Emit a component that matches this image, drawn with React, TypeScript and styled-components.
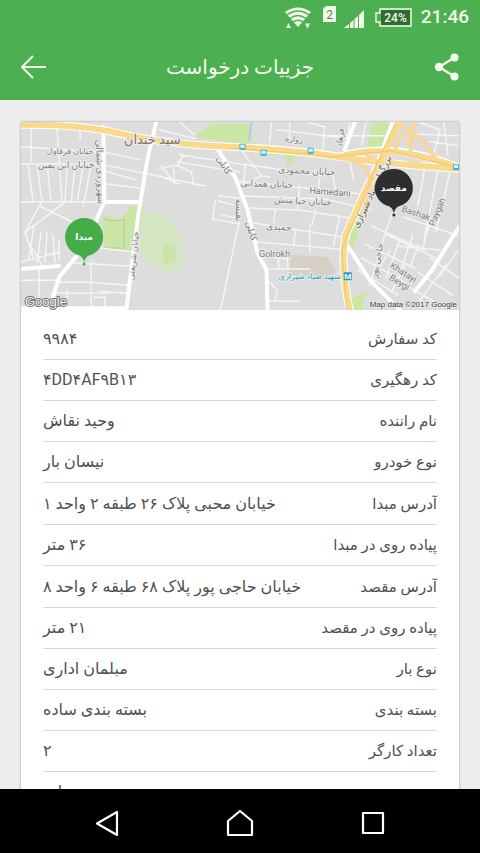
import React from 'react';
import styled, { createGlobalStyle } from 'styled-components';

const GlobalStyle = createGlobalStyle`
  * { box-sizing: border-box; }
  body { margin: 0; background: #ededed; }
  button { font: inherit; color: inherit; border: 0; background: none; padding: 0; cursor: pointer; }
`;

const Screen = styled.div`
  display: flex;
  flex-direction: column;
  height: 100vh;
  overflow: hidden;
  background: #ededed;
  color: #505050;
  font-family: Roboto, 'DejaVu Sans', sans-serif;
`;

const StatusBar = styled.div`
  display: flex;
  flex: none;
  justify-content: flex-end;
  align-items: center;
  height: 34px;
  padding: 0 11px;
  background: #4caf50;
  color: #f1fbea;
  svg { display: block; }
`;

const Clock = styled.time`
  margin-left: 9px;
  font-size: 19px;
  font-weight: 500;
  line-height: 34px;
`;

const AppBar = styled.header`
  display: flex;
  flex: none;
  align-items: center;
  justify-content: space-between;
  height: 66px;
  padding: 0 16px;
  background: #4caf50;
  color: #f4fdf0;
`;

const BarButton = styled.button`
  display: grid;
  place-items: center;
  width: 34px;
  height: 40px;
`;

const Title = styled.h1`
  margin: 0;
  font-size: 20px;
  font-weight: 400;
  line-height: 28px;
`;

const Content = styled.main`
  flex: 1;
  min-height: 0;
  overflow-y: auto;
  scrollbar-width: none;
  padding: 22px 21px;
`;

const Card = styled.article`
  background: #fff;
  box-shadow: 0 0 2px rgba(0, 0, 0, 0.4);
`;

const MapBox = styled.div`
  svg { display: block; width: 100%; height: 188px; }
`;

const Details = styled.dl`
  margin: 0;
  padding: 9px 22px 20px;
`;

const Row = styled.div<{ $address?: boolean }>`
  display: flex;
  align-items: center;
  justify-content: space-between;
  height: ${(p) => (p.$address ? 42 : 41)}px;
  border-bottom: 1px solid #d9d9d9;
  line-height: 24px;
  white-space: nowrap;
`;

const Label = styled.dt`
  font-size: 15px;
`;

const Value = styled.dd`
  margin: 0;
  font-size: 16px;
`;

const NavBar = styled.nav`
  display: flex;
  flex: none;
  justify-content: center;
  align-items: center;
  gap: 93px;
  height: 64px;
  padding-top: 4px;
  background: #000;
  color: #fff;
`;

const NavButton = styled.button`
  display: grid;
  place-items: center;
  width: 40px;
  height: 48px;
`;

const rows: { label: string; value: string; address?: boolean; code?: boolean }[] = [
  { label: 'کد سفارش', value: '۹۹۸۴' },
  { label: 'کد رهگیری', value: '۴DD۴AF۹B۱۳', code: true },
  { label: 'نام راننده', value: 'وحید نقاش' },
  { label: 'نوع خودرو', value: 'نیسان بار' },
  { label: 'آدرس مبدا', value: 'خیابان محبی پلاک ۲۶ طبقه ۲ واحد ۱', address: true },
  { label: 'پیاده روی در مبدا', value: '۳۶ متر' },
  { label: 'آدرس مقصد', value: 'خیابان حاجی پور پلاک ۶۸ طبقه ۶ واحد ۸', address: true },
  { label: 'پیاده روی در مقصد', value: '۲۱ متر' },
  { label: 'نوع بار', value: 'مبلمان اداری' },
  { label: 'بسته بندی', value: 'بسته بندی ساده' },
  { label: 'تعداد کارگر', value: '۲' },
  { label: 'بیمه', value: 'ندارد' },
];

const StatusIcons = () => (
  <svg width="128" height="30" viewBox="284 2 128 30" fill="#f1fbea" aria-label="Wi-Fi, SIM 2, 24%">
    <path d="M285 12Q298 3 311 12L298 27Z" />
    <g fill="none" stroke="#4caf50" strokeWidth="1.4">
      <path d="M287 15Q298 7 309 15" />
      <path d="M290 18.500Q298 12.500 306 18.500" />
      <path d="M293 22Q298 18.500 303 22" />
    </g>
    <path d="M286 28l2.500-5 2.500 5zM305 23.500h5l-2.500 5z" />
    <path d="M326 6h10v16h-13V9z" />
    <text x="329.500" y="18.500" fontSize="12" textAnchor="middle" fill="#3f8d42">2</text>
    <path d="M344 28l5-4v4zM350 23l3.500-3v8H350zM354.500 19l3.500-3v12h-3.500zM359 15l5-5v18h-5z" />
    <path d="M358.500 12v16" stroke="#4caf50" strokeWidth="1" />
    <path d="M380 9h31v17h-31v-4h-4v-9h4z" fill="#4caf50" stroke="#f1fbea" strokeWidth="1.400" />
    <path d="M381 10h29v15h-29z" fill="#2f6b33" />
    <text x="395.500" y="22" fontSize="12" fontWeight="500" textAnchor="middle">24%</text>
  </svg>
);

const BackIcon = () => (
  <svg width="28" height="26" viewBox="0 0 28 26" fill="none" stroke="currentColor" strokeWidth="2">
    <path d="M27 13H3M14 2L3 13l11 11" />
  </svg>
);

const ShareIcon = () => (
  <svg width="26" height="28" viewBox="0 0 26 28" fill="currentColor">
    <path d="M20.500 4.500L5 14l15.500 9.500" fill="none" stroke="currentColor" strokeWidth="2.400" />
    <circle cx="20.500" cy="4.500" r="4" />
    <circle cx="5" cy="14" r="4.200" />
    <circle cx="20.500" cy="23.500" r="4" />
  </svg>
);

type MapLabelData = { t: string; x: number; y: number; r?: number; s?: number; c?: string };

const mapLabels: MapLabelData[] = [
  { t: 'سید  خندان', x: 153, y: 144, s: 13, c: '#85705a' },
  { t: 'خیابان قرقاول', x: 71, y: 154 },
  { t: 'خیابان ابن یمین', x: 67, y: 168, s: 9 },
  { t: 'سهروردی شمالی', x: 98, y: 172, r: 88, s: 9 },
  { t: 'خیابان شریعتی', x: 137, y: 256, r: -84 },
  { t: 'کابلی', x: 222, y: 167, r: 57, s: 9 },
  { t: 'کابلی', x: 249, y: 232, r: 72, s: 9 },
  { t: 'نفیسه', x: 236, y: 210, r: 90, s: 9 },
  { t: 'رواره', x: 294, y: 142, r: 6 },
  { t: 'فرهاد', x: 343, y: 138, r: -82 },
  { t: 'خیابان محمودی', x: 307, y: 174, r: 3, s: 9 },
  { t: 'خیابان همدانی', x: 267, y: 187, r: 2, s: 9 },
  { t: 'Hamedani', x: 330, y: 195, r: 5, s: 9 },
  { t: 'خیابان حیا منش', x: 303, y: 204, r: 3, s: 9 },
  { t: 'حمیدی', x: 279, y: 230, r: 3, s: 9 },
  { t: 'Golrokh', x: 275, y: 257, s: 9 },
  { t: 'شهید صیاد شیرازی', x: 310, y: 279, c: '#2b9ac7' },
  { t: 'بزرگراه صیاد شیرازی', x: 375, y: 193, r: -65, s: 9, c: '#6c5a42' },
  { t: 'Bashak', x: 415, y: 216, r: 19, s: 9 },
  { t: 'Paygah', x: 440, y: 213, r: -68, s: 9 },
  { t: 'حاجی پور', x: 380, y: 261, r: -78, s: 9 },
  { t: 'Khatayi', x: 402, y: 275, r: 32, s: 9 },
  { t: 'Beygi', x: 398, y: 285, r: 32, s: 9 },
];

const MapLabel = ({ t, x, y, r = 0, s = 8, c = '#7c7c7c' }: MapLabelData) => (
  <text x={x} y={y} fontSize={s} fill={c} textAnchor="middle" stroke="#ececec" strokeWidth="2" strokeLinejoin="round" paintOrder="stroke" transform={`rotate(${r} ${x} ${y})`}>
    {t}
  </text>
);

const Pin = ({ x, y, color, text }: { x: number; y: number; color: string; text: string }) => (
  <g>
    <path d={`M${x - 10} ${y + 15}Q${x - 1} ${y + 19} ${x} ${y + 25}Q${x + 1} ${y + 19} ${x + 10} ${y + 15}z`} fill={color} />
    <circle cx={x} cy={y} r="19" fill={color} />
    <circle cx={x} cy={y + 27} r="1.500" fill={color} />
    <text x={x} y={y + 3} fontSize="9" fontWeight="700" textAnchor="middle" fill="#fff">{text}</text>
  </g>
);

const streetsThin = `
M32 126V162M58 129L63 202M81 130V140M22 147L98 152M22 164H100L206 186M22 202H104
M29 164L34 202M38 165L43 202M48 165L52 202M68 165L66 202M76 165L72 202M84 166L78 202M92 166L84 206
M103 152L142 160M105 171L137 180M107 184L140 188M42 203L26 232 35 260M40 206L88 229M26 232L65 203
M28 240L45 268M35 226L30 258M42 232L38 262M48 232L46 262M54 235L56 262M60 240V260
M22 262L60 252M92 247L134 252M75 263L130 266M60 282H90L130 285M52 293H110M92 262V308M40 270V305M68 290V308M95 297H106V308
M100 291L128 293M22 280H62M160 130L196 139M180 122L195 135M240 164L328 176
M180 155L240 164M184 155L178 166M178 162L240 172M160 176L180 184M162 166L175 183 174 165 160 170M176 165L192 172 194 184 202 185
M246 164L244 184 262 176M240 148L262 176 270 177M237 181L325 190 380 196M243 196L325 199 372 210M219 196L240 198
M216 200L213 219 240 224M219 201L234 205M222 215L236 218M247 208L300 210 363 220M276 210L274 222M254 223L292 229 350 238
M296 229L294 245M258 242L350 250M270 257L288 259V267M279 254V267M268 269H310M268 280L278 290 275 301M267 301H300
M240 220L221 310M272 122L270 142M310 123L325 127 323 150M277 130L350 139M290 122V143M350 122L346 154M366 123L362 145M325 136L385 136
M320 178L318 200M332 170L336 192M350 161L354 180M300 185L298 210M316 210L312 225M340 215L334 245M310 225V252
M420 123L440 130 434 154M430 142L459 146M405 134L459 136M444 123L448 155M425 168L418 205M438 171L424 240M450 172L436 232
M392 214L380 250 370 285M372 226L425 250M365 244L415 268M362 258L405 282M358 270L398 295M400 240L386 278M413 235L396 284
M404 217L459 236M386 234L440 260M397 246L440 250M419 245L410 267M429 225L423 248M405 265L392 291M376 273L390 250
M430 258L459 278M418 272L452 295M406 285L440 305M446 265L420 300M458 250L440 276
`;

const streetsWide = `
M22 269L60 266M104 127L105 198M107 202H140M157 122L148 160 139 215 127 310M106 200L85 247 60 277 50 310M22 308H125
M217 147L236 178 248 210 258 253 267 270 268 310M355 123L345 150M459 227L432 270 415 291M348 246L370 280 400 310
`;

const RouteMap = () => (
  <svg viewBox="22 122 437 188" preserveAspectRatio="xMidYMid slice" role="img" aria-label="Map data ©2017 Google">
    <rect x="0" y="100" width="500" height="230" fill="#dddddd" />
    <g fill="#c9e6a4">
      <path d="M103 216l19 3 10-13h12l-7 46-32-5z" />
      <path d="M195 137l17-13h40l-2 23-34-7zM252 143l35 5-9 8-34-5z" />
      <path d="M372 123h13l-9 27-9-1zM379 123h12l-8 25-8 2zM352 207l12 3-11 42-9-4zM352 298l15-7-6 19h-11zM284 152h10v13h-7z" />
    </g>
    <path d="M143 214l16-1 16 11 8 15v27l-13 7-21-9-9-14z" fill="#d4e5c3" />
    <path d="M164 243l12 4v13l-12 4z" fill="#c9e6a4" />
    <path d="M292 255l35 2 10 15-13 8-35-6z" fill="#d5cfc5" />
    <path d="M105 219q11 4 20 0v29h-19" fill="none" stroke="#bdc48d" />
    <g fill="none" strokeLinejoin="round" strokeLinecap="round">
      <path d={streetsThin} stroke="#f5f5f5" strokeWidth="1.500" />
      <path d={streetsWide} stroke="#ffffff" strokeWidth="4" />
      <path d="M252 122L250 140" stroke="#b8c5e8" strokeWidth="2" />
      <g stroke="#fff" strokeWidth="8">
        <path d="M22 125Q80 124 122 134T230 147 340 157 459 169M340 157Q390 140 459 168M395 122L383 155 365 192 346 235Q340 265 350 310" />
      </g>
      <g stroke="#f5d7a2" strokeWidth="4">
        <path d="M330 157Q362 160 368 172T364 208M398 122L414 135 410 153M415 122L408 144M395 150Q403 121 423 141L436 159M388 160L398 164 418 163M368 156L380 163" />
      </g>
      <path d="M22 125Q80 124 122 134T230 147 340 157 459 169M340 157Q390 142 459 168M399 122L384 155 365 192 346 235Q340 265 350 310" stroke="#f9d98b" strokeWidth="6" />
      <path d="M230 148L335 157 390 151 459 168M396 122L378 162 357 215 342 248 347 310" stroke="#f1c774" strokeWidth="1" />
    </g>
    {[[243, 147], [264, 153], [311, 151], [456, 167]].map(([x, y]) => (
      <g key={x}>
        <rect x={x - 3} y={y - 3} width="6" height="6" rx="1" fill="#1fa3d2" />
        <path d={`M${x - 2} ${y - 2}h4v3h-4zM${x - 2} ${y + 2}h1M${x + 1} ${y + 2}h1`} fill="#d9f2fa" stroke="#d9f2fa" strokeWidth=".5" />
      </g>
    ))}
    {mapLabels.map((l) => <MapLabel key={`${l.t}${l.x}`} {...l} />)}
    <rect x="344" y="272" width="8" height="8" rx="1" fill="#1a9fd0" />
    <text x="348" y="279" fontSize="8" fontWeight="700" textAnchor="middle" fill="#fff">M</text>
    <Pin x={85} y={237} color="#43ad49" text="مبدا" />
    <Pin x={394} y={188} color="#2e2e2e" text="مقصد" />
    <text x="26" y="306" fontSize="13" fontFamily="Liberation Sans" fill="#f2f2f2" stroke="#777" strokeWidth="2" strokeLinejoin="round" paintOrder="stroke">Google</text>
    <text x="457" y="307" fontSize="8" fontFamily="Liberation Sans" textAnchor="end" fill="#444" stroke="#e8e8e8" strokeWidth="2" paintOrder="stroke">Map data ©2017 Google</text>
  </svg>
);

export default function App() {
  return (
    <Screen>
      <GlobalStyle />
      <StatusBar>
        <StatusIcons />
        <Clock>21:46</Clock>
      </StatusBar>
      <AppBar>
        <BarButton aria-label="بازگشت"><BackIcon /></BarButton>
        <Title dir="rtl">جزییات درخواست</Title>
        <BarButton aria-label="اشتراک گذاری"><ShareIcon /></BarButton>
      </AppBar>
      <Content>
        <Card>
          <MapBox><RouteMap /></MapBox>
          <Details dir="rtl">
            {rows.map((row) => (
              <Row key={row.label} $address={row.address}>
                <Label>{row.label}</Label>
                <Value dir={row.code ? 'ltr' : 'rtl'}>{row.value}</Value>
              </Row>
            ))}
          </Details>
        </Card>
      </Content>
      <NavBar>
        <NavButton aria-label="بازگشت">
          <svg width="26" height="28" viewBox="0 0 26 28" fill="none" stroke="currentColor" strokeWidth="2.200" strokeLinejoin="round"><path d="M23 3v23L3 14.500z" /></svg>
        </NavButton>
        <NavButton aria-label="خانه">
          <svg width="30" height="30" viewBox="0 0 30 30" fill="none" stroke="currentColor" strokeWidth="2.200" strokeLinejoin="round"><path d="M3 13L15 3l12 10v14H3z" /></svg>
        </NavButton>
        <NavButton aria-label="برنامه‌های اخیر">
          <svg width="26" height="26" viewBox="0 0 26 26" fill="none" stroke="currentColor" strokeWidth="2.200" strokeLinejoin="round"><path d="M3 3h20v20H3z" /></svg>
        </NavButton>
      </NavBar>
    </Screen>
  );
}
